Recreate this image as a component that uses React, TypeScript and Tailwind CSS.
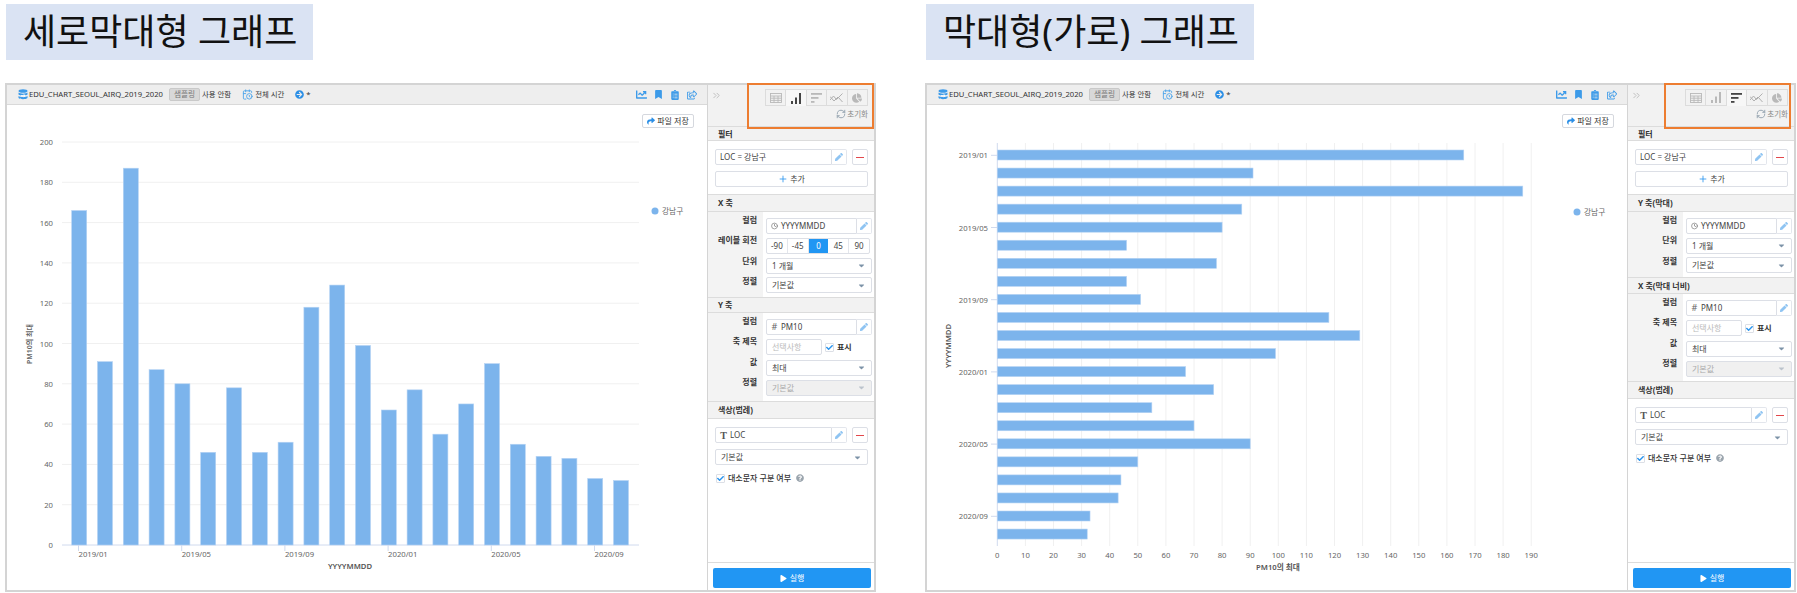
import React from 'react';
import { FaArrowCircleRight, FaBookmark, FaCaretDown, FaChartLine, FaChartPie, FaCheck, FaClipboardList, FaPen, FaPlay, FaQuestionCircle, FaRegShareSquare, FaShare } from 'react-icons/fa';
import { LuCalendarClock, LuChevronsRight, LuClock, LuPlus, LuRefreshCw } from 'react-icons/lu';

const VALUES = [166, 91, 187, 87, 80, 46, 78, 46, 51, 118, 129, 99, 67, 77, 55, 70, 90, 50, 44, 43, 33, 32];
const DATE_LABELS: Record<number, string> = { 0: '2019/01', 4: '2019/05', 8: '2019/09', 12: '2020/01', 16: '2020/05', 20: '2020/09' };

const DbIcon = () => (
    <svg width="10" height="11" viewBox="0 0 10 11" className="shrink-0">
        <ellipse cx="5" cy="2" rx="4.5" ry="1.8" fill="#3d9be9" />
        <path d="M.5 3.6C2 5 8 5 9.5 3.6V5.4C8 6.8 2 6.8.5 5.4Z" fill="#3d9be9" />
        <path d="M.5 7C2 8.4 8 8.4 9.5 7V9C8 10.6 2 10.6.5 9Z" fill="#3d9be9" />
        <path d="M3 6.6H7M5.6 5.4L7.2 6.6L5.6 7.8" stroke="#fff" strokeWidth="0.9" fill="none" />
    </svg>
);

const TableIcon = () => (
    <svg width="12" height="10" viewBox="0 0 12 10" fill="none" stroke="#b9b9b9" strokeWidth="0.9">
        <rect x=".5" y=".5" width="11" height="9" />
        <path d="M.5 3H11.5M.5 5.2H11.5M.5 7.4H11.5M4 3V9.5M8 3V9.5" />
    </svg>
);

const VBarIcon = ({ color }: { color: string }) => (
    <svg width="11" height="11" viewBox="0 0 11 11" fill={color}>
        <rect x="0" y="8" width="2" height="3" />
        <rect x="4" y="4.5" width="2" height="6.5" />
        <rect x="8" y="0" width="2" height="11" />
    </svg>
);

const HBarIcon = ({ color }: { color: string }) => (
    <svg width="11" height="10" viewBox="0 0 11 10" fill={color}>
        <rect x="0" y="0" width="11" height="1.8" />
        <rect x="0" y="4" width="7.5" height="1.8" />
        <rect x="0" y="8" width="3.5" height="1.8" />
    </svg>
);

const LineIcon = () => (
    <svg width="13" height="10" viewBox="0 0 13 10" fill="none" stroke="#b0b0b0" strokeWidth="1">
        <path d="M0 7L3.5 3L6.5 6.5L12.5 .5" />
        <path d="M0 3.5L4 8L8 4L12.5 9" />
    </svg>
);

const Caret = ({ faded }: { faded?: boolean }) => (
    <FaCaretDown className={faded ? 'text-[9px] text-[#bbc3cc]' : 'text-[9px] text-[#7d93a8]'} />
);

const Pencil = () => (
    <div className="flex h-full w-[15px] shrink-0 items-center justify-center rounded-r-[2px] border border-l-0 border-[#e3e6ec] bg-white">
        <FaPen className="text-[8px] text-[#8fc4f2]" />
    </div>
);

const PillInput = ({ icon, text, cls }: { icon?: React.ReactNode; text: string; cls: string }) => (
    <div className={`flex h-[16px] ${cls}`}>
        <div className="flex min-w-0 flex-1 items-center gap-[3px] rounded-l-[2px] border border-[#dcdfe6] bg-white pl-[4px] text-[8px] text-[#444]">
            {icon && <span className="flex w-[7px] shrink-0 justify-center">{icon}</span>}
            <span>{text}</span>
        </div>
        <Pencil />
    </div>
);

const Select = ({ text, disabled, cls }: { text: string; disabled?: boolean; cls: string }) => (
    <div className={`flex h-[16px] items-center justify-between rounded-[2px] border border-[#dcdfe6] pl-[5px] pr-[5px] text-[8px] ${disabled ? 'bg-[#f0f0f0] text-[#aaa]' : 'bg-white text-[#444]'} ${cls}`}>
        <span>{text}</span>
        <Caret faded={disabled} />
    </div>
);

const Check = () => (
    <span className="flex h-[9px] w-[9px] shrink-0 items-center justify-center rounded-[1px] border border-[#dcdfe6] bg-white">
        <FaCheck className="text-[7px] text-[#2b95ee]" />
    </span>
);

const MinusButton = () => (
    <div className="flex h-[16px] w-[16px] shrink-0 items-center justify-center rounded-[2px] border border-[#dcdfe6] bg-white">
        <div className="h-px w-[8px] bg-[#e2484c]" />
    </div>
);

const SectionHeader = ({ title, cls }: { title: string; cls: string }) => (
    <div className={`flex items-center border-y border-[#dcdcdc] bg-[#f2f2f2] pl-[10px] text-[8px] font-bold text-[#333] ${cls}`}>{title}</div>
);

const Rows = ({ rows, cls }: { rows: [string, React.ReactNode][]; cls: string }) => (
    <div className={`flex ${cls}`}>
        <div className="flex w-[55px] shrink-0 flex-col bg-[#f3f3f3] pt-[2px]">
            {rows.map(([label]) => (
                <div key={label} className="h-[20.33px] pr-[6px] text-right text-[8px] font-semibold leading-[11px] text-[#333]">{label}</div>
            ))}
        </div>
        <div className="flex flex-col pl-[3px] pt-[6px]">
            {rows.map(([label, control]) => (
                <div key={label} className="h-[20.33px]">{control}</div>
            ))}
        </div>
    </div>
);

const Clock = () => <LuClock className="text-[8px] text-[#666]" />;
const Hash = () => <span className="text-[9px] text-[#666]">#</span>;

const titleRow = (
    <div className="flex items-center">
        <div className="flex h-[16px] w-[56px] items-center rounded-[2px] border border-[#dcdfe6] bg-white pl-[5px] text-[8px] text-[#bbb]">선택사항</div>
        <span className="ml-[3px]"><Check /></span>
        <span className="ml-[3px] text-[8px] font-semibold text-[#333]">표시</span>
    </div>
);

const Rotation = () => (
    <div className="flex h-[16px] w-[104px] rounded-[2px] border border-[#dcdfe6] bg-white text-[8px] text-[#444]">
        {['-90', '-45', '0', '45', '90'].map(v => (
            <div key={v} className={v === '0' ? 'flex flex-1 items-center justify-center bg-[#2196f3] text-white' : 'flex flex-1 items-center justify-center border-r border-[#e3e6ec] last:border-r-0'}>{v}</div>
        ))}
    </div>
);

const Sidebar = ({ horizontal }: { horizontal: boolean }) => (
    <div className="flex h-full w-[167px] shrink-0 flex-col border-l border-[#d4d4d4] bg-white">
        {/* chart type tabs */}
        <div className="flex h-[41px] shrink-0 flex-col bg-[#f2f2f2]">
            <div className="flex items-start pl-[3px] pt-[4px]">
                <LuChevronsRight className="mt-[1px] text-[11px] text-[#bbb]" />
                <div className="ml-[43px] flex h-[17px] w-[103px] border border-b-0 border-[#dcdcdc]">
                    <div className="flex flex-1 items-center justify-center border-b border-r border-[#dcdcdc]"><TableIcon /></div>
                    <div className={horizontal ? 'flex flex-1 items-center justify-center border-b border-r border-[#dcdcdc]' : 'flex flex-1 items-center justify-center border-r border-[#dcdcdc] bg-[#f7f7f7]'}>
                        <VBarIcon color={horizontal ? '#b9b9b9' : '#444'} />
                    </div>
                    <div className={horizontal ? 'flex flex-1 items-center justify-center border-r border-[#dcdcdc] bg-[#f7f7f7]' : 'flex flex-1 items-center justify-center border-b border-r border-[#dcdcdc]'}>
                        <HBarIcon color={horizontal ? '#444' : '#b9b9b9'} />
                    </div>
                    <div className="flex flex-1 items-center justify-center border-b border-r border-[#dcdcdc]"><LineIcon /></div>
                    <div className="flex flex-1 items-center justify-center border-b border-[#dcdcdc]"><FaChartPie className="text-[10px] text-[#b9b9b9]" /></div>
                </div>
            </div>
            <div className="mt-[2px] flex items-center justify-end gap-[1px] pr-[6px] text-[7.5px] leading-[12px] text-[#888]">
                <LuRefreshCw className="text-[10px] text-[#8a9aa8]" />
                <span>초기화</span>
            </div>
        </div>

        <SectionHeader title="필터" cls="h-[15px]" />
        <div className="flex h-[53px] shrink-0 flex-col gap-[6px] pl-[7px] pr-[6px] pt-[8px]">
            <div className="flex gap-[5px]">
                <PillInput text="LOC = 강남구" cls="w-[132px]" />
                <MinusButton />
            </div>
            <div className="flex h-[16px] items-center justify-center gap-[2px] rounded-[2px] border border-[#dcdfe6] text-[8px] text-[#444]">
                <LuPlus className="text-[10px] text-[#2b95ee]" />
                <span>추가</span>
            </div>
        </div>

        {horizontal ? (
            <>
                <SectionHeader title="Y 축(막대)" cls="h-[18px]" />
                <Rows cls="h-[65px]" rows={[
                    ['컬럼', <PillInput icon={<Clock />} text="YYYYMMDD" cls="w-[106px]" />],
                    ['단위', <Select text="1 개월" cls="w-[106px]" />],
                    ['정렬', <Select text="기본값" cls="w-[106px]" />],
                ]} />
                <SectionHeader title="X 축(막대 너비)" cls="h-[17px]" />
                <Rows cls="h-[87px]" rows={[
                    ['컬럼', <PillInput icon={<Hash />} text="PM10" cls="w-[106px]" />],
                    ['축 제목', titleRow],
                    ['값', <Select text="최대" cls="w-[106px]" />],
                    ['정렬', <Select text="기본값" disabled cls="w-[106px]" />],
                ]} />
            </>
        ) : (
            <>
                <SectionHeader title="X 축" cls="h-[18px]" />
                <Rows cls="h-[85px]" rows={[
                    ['컬럼', <PillInput icon={<Clock />} text="YYYYMMDD" cls="w-[106px]" />],
                    ['레이블 회전', <Rotation />],
                    ['단위', <Select text="1 개월" cls="w-[106px]" />],
                    ['정렬', <Select text="기본값" cls="w-[106px]" />],
                ]} />
                <SectionHeader title="Y 축" cls="h-[16px]" />
                <Rows cls="h-[88px]" rows={[
                    ['컬럼', <PillInput icon={<Hash />} text="PM10" cls="w-[106px]" />],
                    ['축 제목', titleRow],
                    ['값', <Select text="최대" cls="w-[106px]" />],
                    ['정렬', <Select text="기본값" disabled cls="w-[106px]" />],
                ]} />
            </>
        )}

        <SectionHeader title="색상(범례)" cls="h-[18px]" />
        <div className="flex flex-col gap-[6px] pl-[7px] pr-[6px] pt-[8px]">
            <div className="flex gap-[5px]">
                <PillInput icon={<span className="font-['Liberation_Serif',serif] text-[10px] font-bold text-[#555]">T</span>} text="LOC" cls="w-[132px]" />
                <MinusButton />
            </div>
            <Select text="기본값" cls="w-full" />
            <div className="mt-[1px] flex items-center gap-[3px] pl-[1px] text-[8px] font-medium text-[#333]">
                <Check />
                <span>대소문자 구분 여부</span>
                <FaQuestionCircle className="ml-[2px] text-[8px] text-[#9aa4ad]" />
            </div>
        </div>

        <div className="mt-auto border-t border-[#dcdcdc] pb-[2px] pl-[5px] pr-[3px] pt-[5px]">
            <div className="flex h-[20px] items-center justify-center gap-[3px] rounded-[2px] bg-[#2196f3] text-[8px] text-white">
                <FaPlay className="text-[7px]" />
                <span>실행</span>
            </div>
        </div>
    </div>
);

const TopBar = () => (
    <div className="flex h-[20px] shrink-0 items-center border-b border-[#d9d9d9] bg-[#eeeeee] pl-[11px] pr-[10px] text-[7.65px] text-[#333]">
        <DbIcon />
        <span className="ml-[1px]">EDU_CHART_SEOUL_AIRQ_2019_2020</span>
        <span className="ml-[6px] rounded-[2px] border border-[#c9c9c9] bg-[#d8d8d8] px-[4px] leading-[11px] text-[#777]">샘플링</span>
        <span className="ml-[2px] text-[7.4px]">사용 안함</span>
        <LuCalendarClock className="ml-[11px] text-[11px] text-[#4ea5ea]" />
        <span className="ml-[2px] text-[7.4px]">전체 시간</span>
        <FaArrowCircleRight className="ml-[11px] text-[9px] text-[#2b8fe6]" />
        <span className="ml-[2px]">*</span>
        <div className="ml-auto flex items-center gap-[7px] text-[#3d9be9]">
            <FaChartLine className="text-[11px]" />
            <FaBookmark className="text-[9px]" />
            <FaClipboardList className="text-[10px]" />
            <FaRegShareSquare className="text-[10px]" />
        </div>
    </div>
);

const SaveButton = () => (
    <div className="absolute right-[13px] top-[9px] flex h-[14px] w-[52px] items-center justify-center gap-[2px] rounded-[2px] border border-[#d5d8de] bg-white text-[8px] text-[#333]">
        <FaShare className="text-[8px] text-[#2b8fe6]" />
        <span>파일 저장</span>
    </div>
);

// columns, drawn in page coordinates through the viewBox
const VerticalChart = () => (
    <svg className="block h-full w-full" viewBox="7 105 700 485" fontSize="7.7" fill="#666">
        {[0, 20, 40, 60, 80, 100, 120, 140, 160, 180, 200].map(t => {
            const y = 545 - t * 2.015;
            return (
                <g key={t}>
                    <line x1="62" x2="639" y1={y} y2={y} stroke={t === 0 ? '#d0daee' : '#f0f0f0'} />
                    <text x="53" y={y + 3} textAnchor="end">{t}</text>
                </g>
            );
        })}
        {VALUES.map((v, i) => {
            const x = 71.7 + i * 25.8;
            return <rect key={i} x={x} y={545 - v * 2.015} width="15" height={v * 2.015} fill="#7cb4ec" stroke="#b5d3f4" strokeWidth="0.6" />;
        })}
        {Object.entries(DATE_LABELS).map(([i, label]) => {
            const x = 78.5 + Number(i) * 25.8;
            return (
                <g key={i}>
                    <line x1={x} x2={x} y1="545" y2="551" stroke="#d0daee" />
                    <text x={x} y="557">{label}</text>
                </g>
            );
        })}
        <text x="350" y="569" textAnchor="middle" fontWeight="600" fill="#555">YYYYMMDD</text>
        <text transform="translate(32 344) rotate(-90)" textAnchor="middle" fontSize="7" fontWeight="600" fill="#666">PM10의 최대</text>
        <circle cx="655" cy="211" r="3.5" fill="#7cb4ec" />
        <text x="662" y="214">강남구</text>
    </svg>
);

// horizontal bars, drawn in page coordinates through the viewBox
const HorizontalChart = () => (
    <svg className="block h-full w-full" viewBox="927 105 700 485" fontSize="7.7" fill="#666">
        {Array.from({ length: 20 }, (_, i) => i * 10).map(t => {
            const x = 997.3 + t * 2.81;
            return (
                <g key={t}>
                    <line x1={x} x2={x} y1="143" y2="546" stroke={t === 0 ? '#d0daee' : '#f0f0f0'} />
                    <text x={x} y="558" textAnchor="middle">{t}</text>
                </g>
            );
        })}
        {VALUES.map((v, i) => (
            <rect key={i} x="997.3" y={150 + i * 18.05} width={v * 2.81} height="10" fill="#7cb4ec" stroke="#b5d3f4" strokeWidth="0.6" />
        ))}
        {Object.entries(DATE_LABELS).map(([i, label]) => {
            const y = 155.3 + Number(i) * 18.05;
            return (
                <g key={i}>
                    <line x1="991" x2="997" y1={y} y2={y} stroke="#d0daee" />
                    <text x="988" y={y + 3} textAnchor="end">{label}</text>
                </g>
            );
        })}
        <text x="1278" y="570" textAnchor="middle" fontWeight="600" fill="#555">PM10의 최대</text>
        <text transform="translate(951 346) rotate(-90)" textAnchor="middle" fontWeight="600" fill="#555">YYYYMMDD</text>
        <circle cx="1577" cy="212" r="3.5" fill="#7cb4ec" />
        <text x="1584" y="215">강남구</text>
    </svg>
);

const Card = ({ title, titleCls, horizontal, cls, markCls }: { title: string; titleCls: string; horizontal: boolean; cls: string; markCls: string }) => (
    <div className={`flex w-[871px] flex-col ${cls}`}>
        <div className={`mt-[4px] flex h-[56px] items-center whitespace-nowrap bg-[#dae3f3] pl-[17px] text-[36px] text-[#111] ${titleCls}`}>{title}</div>
        <div className="relative mt-[23px] flex h-[509px] w-full border-2 border-[#d4d4d4] bg-white">
            <div className="flex h-full min-w-0 flex-1 flex-col">
                <TopBar />
                <div className="relative min-h-0 flex-1">
                    {horizontal ? <HorizontalChart /> : <VerticalChart />}
                    <SaveButton />
                </div>
            </div>
            <Sidebar horizontal={horizontal} />
            <div className={`absolute top-[-2px] h-[46px] w-[127px] border-2 border-[#ed7d31] ${markCls}`} />
        </div>
    </div>
);

export default function App() {
    return (
        <div className="flex h-[593px] w-[1797px] overflow-hidden bg-white pl-[5px] font-['Noto_Sans','Noto_Sans_CJK_KR',sans-serif]">
            <Card title="세로막대형 그래프" titleCls="ml-px w-[307px]" horizontal={false} cls="" markCls="right-0" />
            <Card title="막대형(가로) 그래프" titleCls="ml-px w-[328px]" horizontal={true} cls="ml-[49px]" markCls="right-[3px]" />
        </div>
    );
}
